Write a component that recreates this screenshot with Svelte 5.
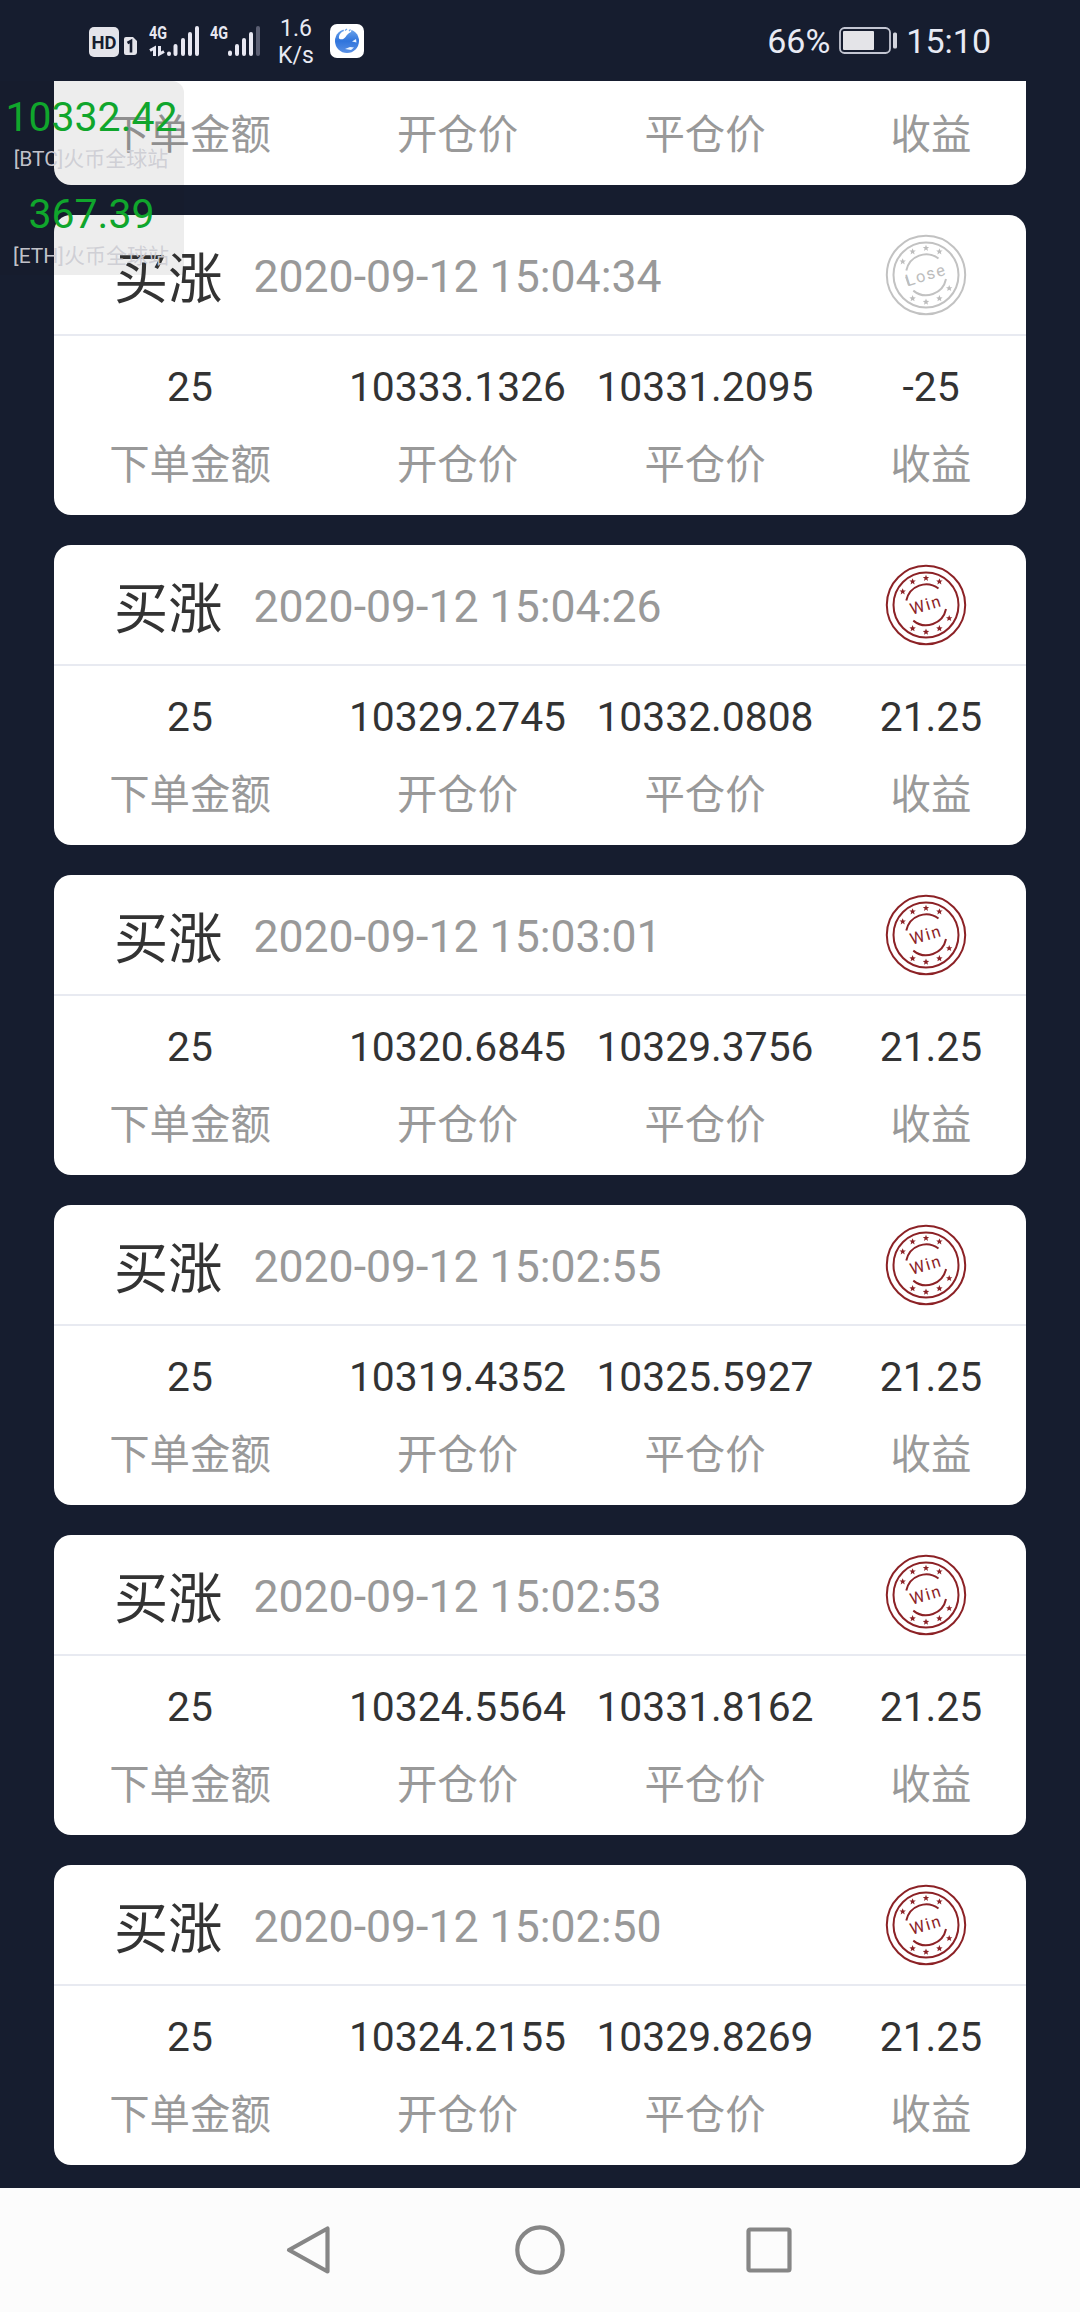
<script>
  const labels = ['下单金额', '开仓价', '平仓价', '收益'];

  const orders = [
    { time: '2020-09-12 15:04:34', values: ['25', '10333.1326', '10331.2095', '-25'], win: false },
    { time: '2020-09-12 15:04:26', values: ['25', '10329.2745', '10332.0808', '21.25'], win: true },
    { time: '2020-09-12 15:03:01', values: ['25', '10320.6845', '10329.3756', '21.25'], win: true },
    { time: '2020-09-12 15:02:55', values: ['25', '10319.4352', '10325.5927', '21.25'], win: true },
    { time: '2020-09-12 15:02:53', values: ['25', '10324.5564', '10331.8162', '21.25'], win: true },
    { time: '2020-09-12 15:02:50', values: ['25', '10324.2155', '10329.8269', '21.25'], win: true }
  ];

  const tickers = [
    { price: '10332.42', name: '[BTC]火币全球站' },
    { price: '367.39', name: '[ETH]火币全球站' }
  ];

  const stars = [[-23.3, -13.5], [-13.4, -23.5], [0, -27], [13.4, -23.5], [-13.4, 23.3], [0, 26.8], [13.4, 23.3], [23.2, 13.2]];
</script>

<div class="screen">
  <header class="status">
    <svg class="signals" width="172" height="40" viewBox="88 20 172 40">
      <rect x="89" y="26" width="30" height="30" rx="5" fill="#e4e4ea" />
      <text x="104" y="47.500" font-size="18" font-weight="700" text-anchor="middle" fill="#161d2f" textLength="25" lengthAdjust="spacingAndGlyphs">HD</text>
      <path d="M126 36h7l4 4v11a3 3 0 0 1-3 3h-8a2 2 0 0 1-2-2V38a2 2 0 0 1 2-2z" fill="#e4e4ea" />
      <path d="M127.500 42l3.500-2v11.500" fill="none" stroke="#161d2f" stroke-width="2.600" />
      <g class="net">
        <text x="149" y="38" textLength="18" lengthAdjust="spacingAndGlyphs">4G</text>
        <text x="210" y="38" textLength="18" lengthAdjust="spacingAndGlyphs">4G</text>
      </g>
      <path d="M150 49.500l4.500-2.500v8M159.500 45v8l4.500-2.500" fill="none" stroke="#e8e8f2" stroke-width="3" />
      <g stroke="#e8e8f2" stroke-width="4" stroke-linecap="round">
        <path d="M169 52.500v.5M175.500 45v8M183 39v14M190 33v20M197 27v26" />
        <path d="M230 51.500v1.500M237 45v8M244 39v14M251 33v20" />
        <path d="M258 27v26" stroke="#5b5f73" />
      </g>
    </svg>
    <div class="speed"><span>1.6</span><span>K/s</span></div>
    <svg class="app-icon" width="34" height="34" viewBox="0 0 34 34">
      <defs>
        <linearGradient id="globe" x1="0" y1="0" x2="0" y2="1">
          <stop offset="0" stop-color="#6ea6ec" />
          <stop offset="0.5" stop-color="#2f74dc" />
          <stop offset="1" stop-color="#5a90e4" />
        </linearGradient>
      </defs>
      <rect width="34" height="34" rx="7" fill="#fff" />
      <circle cx="17" cy="17" r="12" fill="url(#globe)" />
      <path d="M9 14.500C8.500 11 11 8 14 7l-1-3h9l-1 4c-3 1-4 3-5.500 5-2 2.500-4 3-6.500 1.500z" fill="#fff" />
      <path d="M15 6.500l2-1.500M19 7l1.500-1.500" stroke="#6ea6ec" stroke-width="1.200" />
      <path d="M22 17.500l4-2.500.5 3.500zM15 25l5-2 4 .5-3 2.500z" fill="#e8f2ff" />
    </svg>
    <span class="percent">66%</span>
    <svg class="battery" width="59" height="30" viewBox="0 0 59 30">
      <rect x="1" y="2" width="50" height="25" rx="4.500" fill="none" stroke="#c3c6d2" stroke-width="1.800" />
      <rect x="4" y="5" width="31" height="19" rx="1" fill="#e4e4e8" />
      <rect x="54" y="6.500" width="4" height="16" rx="1.500" fill="#d2d4dc" />
    </svg>
    <span class="clock">15:10</span>
  </header>

  <main>
    <section class="card partial">
      <div class="row labels">
        {#each labels as label}
          <span>{label}</span>
        {/each}
      </div>
    </section>

    {#each orders as order}
      <section class="card">
        <div class="head">
          <h3>买涨</h3>
          <time>{order.time}</time>
          <svg class="stamp" class:lose={!order.win} width="82" height="82" viewBox="-41 -41 82 82">
            <circle r="39.200" />
            <circle r="32.500" />
            <path d="M-19.700-4.500A20.300 20.300 0 0 1 12.500-16.500M-12.700 15.600A20.300 20.300 0 0 0 20 4" />
            {#if !order.win}
              <path d="M-20 1.500l3 9" />
            {/if}
            {#each stars as [x, y]}
              <path class="star" transform="translate({x} {y})" d="M0-3.200L.9-1 3.200-.9 1.400.6 2 2.900 0 1.600-2 2.900-1.400.6-3.200-.9-.9-1z" />
            {/each}
            <text class="word" y="5.500" transform="rotate(-17)">{order.win ? 'Win' : 'Lose'}</text>
          </svg>
        </div>
        <div class="row values">
          {#each order.values as value}
            <span>{value}</span>
          {/each}
        </div>
        <div class="row labels">
          {#each labels as label}
            <span>{label}</span>
          {/each}
        </div>
      </section>
    {/each}
  </main>

  <nav>
    <svg width="56" height="56" viewBox="0 0 56 56"><path d="M44.500 6.500v43L6 28z" /></svg>
    <svg width="56" height="56" viewBox="0 0 56 56"><circle cx="28" cy="28" r="22.700" /></svg>
    <svg width="56" height="56" viewBox="0 0 56 56"><rect x="7.500" y="7.500" width="41" height="41" rx="1.500" /></svg>
  </nav>

  <aside class="floating">
    {#each tickers as ticker}
      <div class="ticker">
        <strong>{ticker.price}</strong>
        <small>{ticker.name}</small>
      </div>
    {/each}
  </aside>
</div>

<style>
  :global(body) {
    margin: 0;
    background: #161d2f;
  }

  .screen {
    position: relative;
    display: flex;
    flex-direction: column;
    width: 1080px;
    height: 2312px;
    overflow: hidden;
    background: #161d2f;
    font-family: Roboto, "Noto Sans CJK SC", sans-serif;
  }

  .status {
    display: flex;
    align-items: center;
    box-sizing: border-box;
    height: 81px;
    flex: none;
    padding: 0 89px 0 88px;
    color: #e8eaf4;
  }

  .net text {
    fill: #e8e8f2;
    font-size: 18px;
    font-weight: 700;
  }

  .speed {
    display: flex;
    flex-direction: column;
    align-items: center;
    width: 36px;
    margin: 2px 0 0 18px;
    font-size: 23px;
    line-height: 27px;
  }

  .app-icon {
    margin-left: 16px;
  }

  .percent {
    margin-left: auto;
    font-size: 34px;
  }

  .battery {
    margin: 0 8px 0 9px;
  }

  .clock {
    font-size: 34px;
  }

  main {
    display: flex;
    flex-direction: column;
    gap: 30px;
    flex: 1;
    min-height: 0;
    padding: 0 54px;
  }

  .card {
    flex: none;
    height: 300px;
    border-radius: 17px;
    background: #fff;
  }

  .partial {
    height: 104px;
    border-radius: 0 0 17px 17px;
  }

  .head {
    display: flex;
    align-items: center;
    box-sizing: border-box;
    height: 121px;
    padding: 0 59px 0 60px;
    border-bottom: 2px solid #e8eaf1;
  }

  h3 {
    margin: 10px 31px 0 0;
    color: #333;
    font-size: 54.2px;
    font-weight: 400;
    line-height: 60px;
  }

  time {
    margin-top: 5px;
    color: #999;
    font-size: 44.6px;
  }

  .stamp {
    margin-left: auto;
    fill: none;
    stroke: #8c2226;
    stroke-width: 2;
    color: #8c2226;
  }

  .stamp.lose {
    stroke: #c2c2c2;
    color: #bdbdbd;
  }

  .star,
  .word {
    fill: currentColor;
    stroke: none;
  }

  .word {
    font-size: 16.5px;
    letter-spacing: 1.6px;
    text-anchor: middle;
  }

  .row {
    display: flex;
    font-size: 40.4px;
    text-align: center;
  }

  .row span:nth-child(1) {
    width: 272px;
  }

  .row span:nth-child(2) {
    width: 263px;
  }

  .row span:nth-child(3) {
    width: 232px;
  }

  .row span:nth-child(4) {
    width: 190px;
    margin-left: auto;
  }

  .values {
    padding-top: 11px;
    color: #333;
    font-size: 40.8px;
    line-height: 80px;
  }

  .labels {
    padding-top: 3px;
    color: #999;
    line-height: 72px;
  }

  .partial .labels {
    padding-top: 19px;
  }

  nav {
    display: flex;
    align-items: center;
    justify-content: center;
    gap: 173px;
    flex: none;
    height: 124px;
    background: #fcfcfc;
  }

  nav svg {
    fill: none;
    stroke: #868686;
    stroke-width: 4.2;
    stroke-linejoin: round;
  }

  /* price widget floating above the page */
  .floating {
    position: absolute;
    top: 81px;
    left: 0;
    width: 184px;
    height: 194px;
    border-radius: 0 12px 0 0;
    background: rgba(22, 22, 22, 0.08);
  }

  .ticker {
    display: flex;
    flex-direction: column;
    align-items: center;
    height: 97px;
  }

  strong {
    margin-top: 11px;
    padding-right: 1px;
    color: #10a62c;
    font-size: 41px;
    font-weight: 400;
    line-height: 50px;
  }

  small {
    margin-top: -1px;
    padding-right: 2px;
    color: rgba(205, 205, 212, 0.95);
    font-size: 21px;
    line-height: 36px;
    white-space: nowrap;
  }
</style>
